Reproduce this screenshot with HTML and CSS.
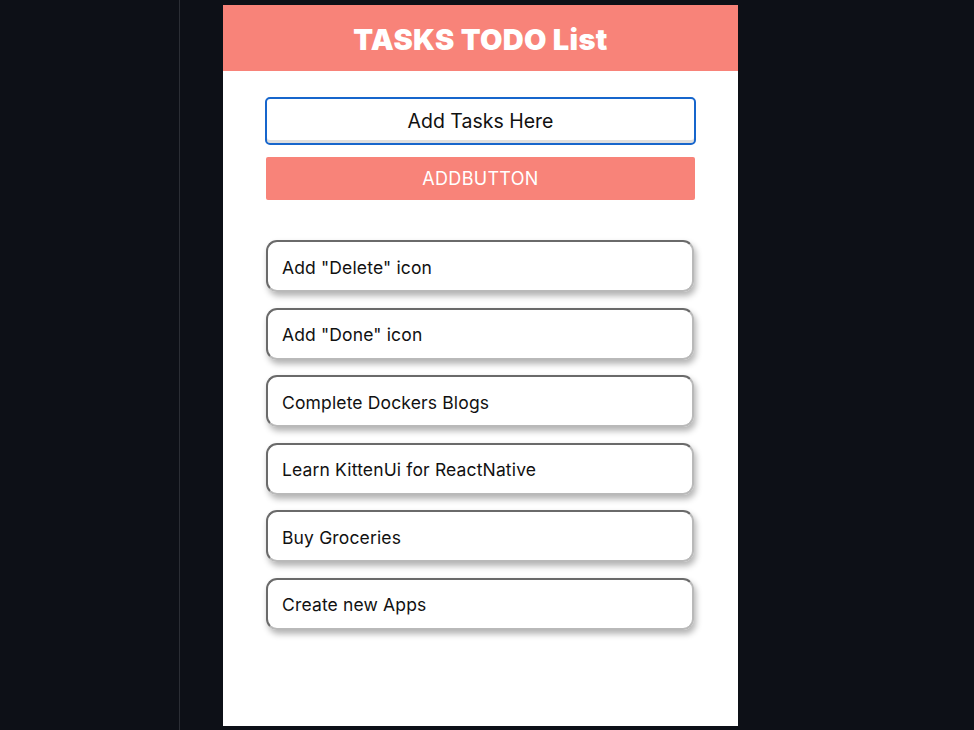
FILE: index.html
```html
<!DOCTYPE html>
<html>
<head>
<meta charset="utf-8">
<link rel="stylesheet" href="styles.css">
</head>
<body>
<div class="page">
  <div class="sidebar"></div>
  <div class="main">
    <div class="app">
      <header class="header"><h1 class="title">TASKS TODO List</h1></header>
      <div class="content">
        <div class="input">Add Tasks Here</div>
        <div class="button">ADDBUTTON</div>
        <ul class="list">
          <li class="item">Add "Delete" icon</li>
          <li class="item">Add "Done" icon</li>
          <li class="item">Complete Dockers Blogs</li>
          <li class="item">Learn KittenUi for ReactNative</li>
          <li class="item">Buy Groceries</li>
          <li class="item">Create new Apps</li>
        </ul>
      </div>
    </div>
  </div>
</div>
</body>
</html>
```
FILE: styles.css
```css
html, body {
  margin: 0;
  padding: 0;
  background: #0d1017;
  height: 100%;
}
.page {
  display: flex;
  height: 730px;
  overflow: hidden;
}
.sidebar {
  width: 179px;
  border-right: 1px solid #2b2e35;
  flex: none;
}
.main {
  flex: none;
  padding: 5px 0 0 43px;
}
.app {
  width: 515px;
  height: 721px;
  background: #ffffff;
  display: flex;
  flex-direction: column;
}
.header {
  background: #f88379;
  height: 66px;
  padding-top: 3px;
  box-sizing: border-box;
  display: flex;
  align-items: center;
  justify-content: center;
}
.title {
  margin: 0;
  color: #ffffff;
  font-family: Inter, "Noto Sans", sans-serif;
  font-weight: 900;
  font-size: 29px;
  letter-spacing: 0.3px;
}
.content {
  padding: 26px 42px 0 42px;
  display: flex;
  flex-direction: column;
  font-family: Inter, "Noto Sans", sans-serif;
}
.input {
  height: 44px;
  border: 2px solid #1766cc;
  border-radius: 5px;
  box-shadow: inset 0 -3px 0 #dedede;
  display: flex;
  align-items: center;
  justify-content: center;
  font-size: 19.5px;
  color: #111;
}
.button {
  margin: 12px 1px 0 1px;
  height: 43px;
  background: #f88379;
  border-radius: 2px;
  color: #ffffff;
  font-size: 18px;
  display: flex;
  align-items: center;
  justify-content: center;
  letter-spacing: 0.3px;
}
.list {
  list-style: none;
  margin: 40px 0 0 1px;
  padding: 0;
  width: 428px;
  display: flex;
  flex-direction: column;
  gap: 15.6px;
}
.item {
  border: 2px solid;
  border-color: #6a6a6a #b9b9b9 #b9b9b9 #6a6a6a;
  border-radius: 11px;
  box-shadow: 2px 4px 6px rgba(0, 0, 0, 0.3);
  padding-left: 14px;
  padding-top: 2px;
  box-sizing: border-box;
  height: 52px;
  display: flex;
  align-items: center;
  font-size: 17.5px;
  letter-spacing: 0.15px;
  color: #111;
}
```
